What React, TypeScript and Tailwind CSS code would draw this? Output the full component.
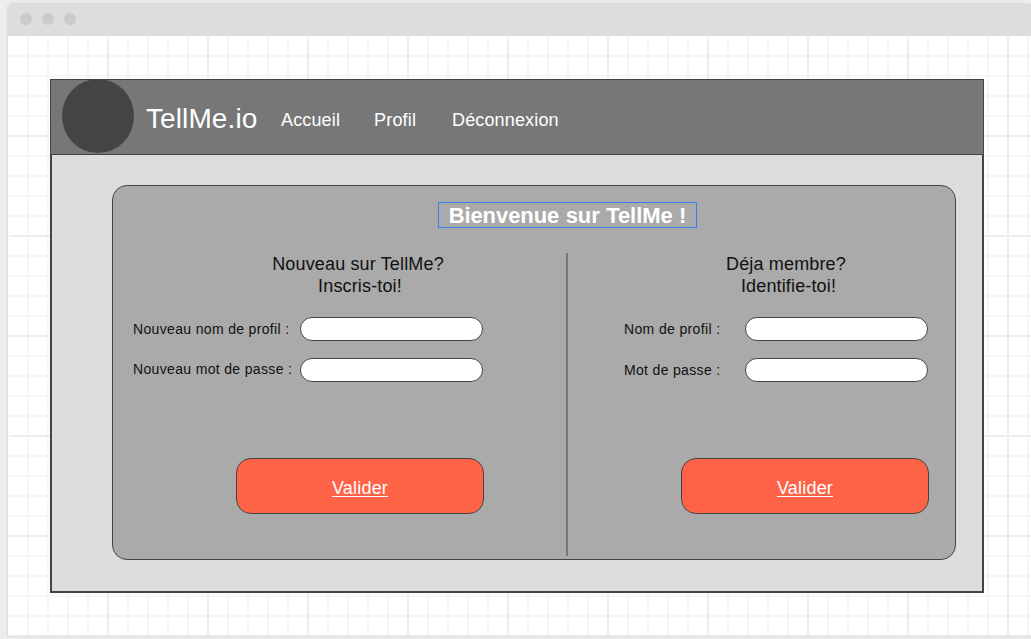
import type { ReactNode } from "react";

function NavLink({ children, className }: { children: ReactNode; className: string }) {
  return (
    <a href="#" className={`whitespace-nowrap text-[18px] leading-5 ${className}`}>
      {children}
    </a>
  );
}

function Field({ label, labelClass, rowClass }: { label: string; labelClass: string; rowClass: string }) {
  return (
    <label className={`flex h-6 items-center ${rowClass}`}>
      <span className={`shrink-0 whitespace-nowrap text-[14px] leading-4 ${labelClass}`}>{label}</span>
      <input className="h-6 w-[183px] rounded-full border border-[#444] bg-white px-3 text-sm outline-none" />
    </label>
  );
}

function Submit({ className }: { className: string }) {
  return (
    <button
      className={`mt-[76px] flex h-14 w-[248px] items-center justify-center rounded-[15px] border border-[#444] bg-[#ff6347] pt-[5px] text-[18px] tracking-[0.2px] text-white underline decoration-1 underline-offset-2 ${className}`}
    >
      Valider
    </button>
  );
}

export default function App() {
  return (
    <div className="h-[639px] w-full overflow-hidden bg-[#ededed] pt-[3px] pl-[7px] font-['Liberation_Sans',Arial,sans-serif]">
      <div className="h-[634px] w-[1026px] overflow-hidden rounded-t-[5px] border-b border-l border-[#ddd] bg-white shadow-[0_0_6px_rgba(0,0,0,0.03)]">
        <div className="-ml-px flex h-[33px] gap-[10px] bg-[#ddd] pt-[10px] pl-[13px]">
          <span className="size-3 rounded-full bg-[#cacaca]" />
          <span className="size-3 rounded-full bg-[#cacaca]" />
          <span className="size-3 rounded-full bg-[#cacaca]" />
        </div>

        <div className="mt-px ml-px h-[600px] bg-[linear-gradient(to_right,transparent_98px,#ededed_98px),linear-gradient(to_bottom,transparent_98px,#ededed_98px),linear-gradient(to_right,transparent_18px,#f6f6f6_18px),linear-gradient(to_bottom,transparent_18px,#f6f6f6_18px)] bg-[length:100px_100px,100px_100px,20px_20px,20px_20px] pt-[42px] pl-[41px]">
          <div className="flex h-[514px] w-[934px] flex-col">
            <header className="flex h-[76px] border border-[#444] bg-[#777] pl-[11px] text-white">
              <span className="-mt-px h-[74px] w-[72px] shrink-0 rounded-[50%] bg-[#444]" />
              <span className="mt-[23px] ml-3 w-[135px] whitespace-nowrap text-[28px] leading-8 tracking-[0.1px]">TellMe.io</span>
              <nav className="mt-[30px] flex">
                <NavLink className="w-[93px] tracking-[0.15px]">Accueil</NavLink>
                <NavLink className="w-[78px] tracking-[0.2px]">Profil</NavLink>
                <NavLink className="tracking-[0.15px]">Déconnexion</NavLink>
              </nav>
            </header>

            <main className="flex-1 border-2 border-t-0 border-[#444] bg-[#ddd] pt-[30px] pl-[60px]">
              <section className="h-[375px] w-[844px] rounded-[15px] border border-[#444] bg-[#aaa] pt-4 text-[#111]">
                <h1 className="ml-[325px] h-[26px] w-[259px] border border-[#3d7bf0] text-center text-[22px] leading-[26px] font-bold tracking-[-0.08px] whitespace-nowrap text-white [word-spacing:0.5px]">
                  Bienvenue sur TellMe !
                </h1>
                <div className="mt-[25px] flex h-[303px]">
                  <form className="w-[453px] pl-5">
                    <h2 className="w-[450px] text-center text-[18px] leading-[22px] tracking-[0.15px]">
                      Nouveau sur TellMe?
                      <span className="block pl-1">Inscris-toi!</span>
                    </h2>
                    <Field label="Nouveau nom de profil :" labelClass="w-[167px] tracking-[0.34px]" rowClass="mt-5" />
                    <Field label="Nouveau mot de passe :" labelClass="w-[167px] pb-0.5 tracking-[0.34px]" rowClass="mt-[17px]" />
                    <Submit className="ml-[103px]" />
                  </form>
                  <div className="w-[2px] bg-[#777]" />
                  <form className="w-[387px] pl-14">
                    <h2 className="w-[324px] text-center text-[18px] leading-[22px] tracking-[0.15px]">
                      Déja membre?
                      <span className="block pl-[5px]">Identifie-toi!</span>
                    </h2>
                    <Field label="Nom de profil :" labelClass="w-[121px] tracking-[0.36px]" rowClass="mt-5" />
                    <Field label="Mot de passe :" labelClass="w-[121px] tracking-[0.33px]" rowClass="mt-[17px]" />
                    <Submit className="ml-[57px]" />
                  </form>
                </div>
              </section>
            </main>
          </div>
        </div>
      </div>
    </div>
  );
}
